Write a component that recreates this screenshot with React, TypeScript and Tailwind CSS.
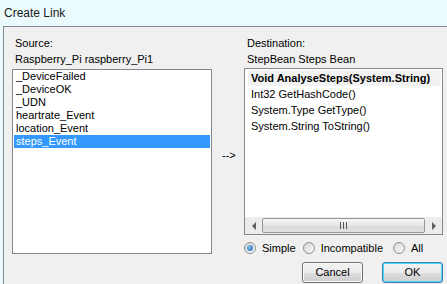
const sourceItems = ["_DeviceFailed", "_DeviceOK", "_UDN", "heartrate_Event", "location_Event", "steps_Event"];
const destItems = ["Int32 GetHashCode()", "System.Type GetType()", "System.String ToString()"];

function Radio({ checked }: { checked?: boolean }) {
  return (
    <span className="w-[12px] h-[12px] rounded-full border border-[#8e8f8f] bg-gradient-to-br from-[#d6d6d6] to-[#fbfbfb] flex items-center justify-center shrink-0">
      {checked && <span className="w-[6px] h-[6px] rounded-full bg-[radial-gradient(circle_at_35%_35%,#7fc3f0,#1b5fa8)]" />}
    </span>
  );
}

function Button({ label, primary }: { label: string; primary?: boolean }) {
  return (
    <div
      className={
        "w-[61px] h-[21px] rounded-[3px] border flex items-center justify-center text-[11px] " +
        (primary
          ? "border-[#3c7fb1] shadow-[inset_0_0_0_1px_#48d8fb] bg-[linear-gradient(#f2f2f2_0%,#ebebeb_50%,#dddddd_51%,#cfcfcf_100%)]"
          : "border-[#707070] shadow-[inset_0_0_0_1px_#fcfcfc] bg-[linear-gradient(#f2f2f2_0%,#ebebeb_50%,#dddddd_51%,#cfcfcf_100%)]")
      }
    >
      {label}
    </div>
  );
}

export default function App() {
  return (
    <div className="w-[447px] h-[284px] overflow-hidden bg-[#eafafd] flex flex-col font-['Liberation_Sans',Arial,sans-serif] text-[11px] text-black">
      <div className="h-[26px] pl-[4px] flex items-center text-[12px] text-[#1a1a1a]">Create Link</div>

      <div className="flex-1 ml-[3px] border-l border-t border-[#858c90] bg-[#f0f0f0] flex pl-[8px] pt-[8px]">
        {/* source column */}
        <div className="w-[200px] flex flex-col">
          <div className="pl-[3px] leading-[16px]">Source:</div>
          <div className="pl-[3px] leading-[16px]">Raspberry_Pi raspberry_Pi1</div>
          <div className="mt-[2px] h-[185px] border border-[#828790] bg-white px-[1px]">
            {sourceItems.map((s) => (
              <div
                key={s}
                className={"h-[13px] leading-[13px] pl-[2px] " + (s === "steps_Event" ? "bg-[#3399ff] text-white" : "")}
              >
                {s}
              </div>
            ))}
          </div>
        </div>

        {/* arrow */}
        <div className="w-[32px] pt-[112px] pl-[10px] leading-[16px]">--&gt;</div>

        {/* destination column */}
        <div className="w-[199px] flex flex-col">
          <div className="pl-[3px] leading-[16px]">Destination:</div>
          <div className="pl-[3px] leading-[16px]">StepBean Steps Bean</div>
          <div className="mt-[1px] h-[167px] border border-[#828790] bg-white flex flex-col">
            <div className="flex-1 pt-[1px] pl-[3px] pr-[1px]">
              <div className="h-[16px] leading-[16px] pl-[3px] font-bold bg-[#f2f2f2] whitespace-nowrap">
                Void AnalyseSteps(System.String)
              </div>
              {destItems.map((d) => (
                <div key={d} className="h-[16px] leading-[16px] pl-[3px] whitespace-nowrap">
                  {d}
                </div>
              ))}
            </div>
            {/* horizontal scrollbar */}
            <div className="h-[17px] bg-[#ececec] flex items-stretch">
              <div className="w-[17px] flex items-center justify-center">
                <span className="w-0 h-0 border-y-[4px] border-y-transparent border-r-[4px] border-r-[#606060]" />
              </div>
              <div className="flex-1 py-[1px]">
                <div className="h-full rounded-[2px] border border-[#979797] bg-[linear-gradient(#f6f6f6,#e6e6e6_50%,#d9d9d9_51%,#e0e0e0)] flex items-center justify-center gap-[2px]">
                  <span className="w-px h-[7px] bg-[#555]" />
                  <span className="w-px h-[7px] bg-[#555]" />
                  <span className="w-px h-[7px] bg-[#555]" />
                </div>
              </div>
              <div className="w-[17px] flex items-center justify-center">
                <span className="w-0 h-0 border-y-[4px] border-y-transparent border-l-[4px] border-l-[#606060]" />
              </div>
            </div>
          </div>

          <div className="mt-[5px] h-[16px] flex items-center">
            <Radio checked />
            <span className="ml-[6px]">Simple</span>
            <span className="ml-[7px]"><Radio /></span>
            <span className="ml-[6px]">Incompatible</span>
            <span className="ml-[10px]"><Radio /></span>
            <span className="ml-[6px]">All</span>
          </div>

          <div className="mt-[6px] flex justify-end gap-[19px]">
            <Button label="Cancel" />
            <Button label="OK" primary />
          </div>
        </div>
      </div>
    </div>
  );
}
